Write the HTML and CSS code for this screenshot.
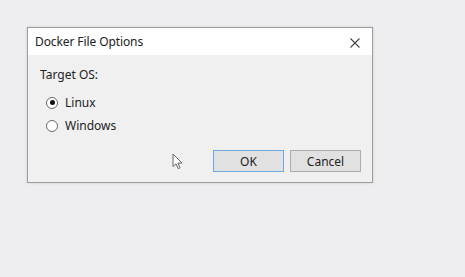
FILE: index.html
```html
<!DOCTYPE html>
<html lang="en">
<head>
  <meta charset="UTF-8" />
  <title>Docker File Options</title>
  <link rel="stylesheet" href="styles.css">
</head>
<body>
  <div class="dialog">
    <div class="titlebar">
      <span class="title">Docker File Options</span>
      <span class="close">
        <svg width="10" height="10" viewBox="0 0 10 10"><path d="M0.5 0.5 L9.5 9.5 M9.5 0.5 L0.5 9.5" stroke="#444" stroke-width="1.1" fill="none"/></svg>
      </span>
    </div>
    <div class="content">
      <div class="label">Target OS:</div>
      <div class="options">
        <label class="radio"><span class="dot checked"></span>Linux</label>
        <label class="radio"><span class="dot"></span>Windows</label>
      </div>
      <div class="buttons">
        <button class="btn default">OK</button>
        <button class="btn">Cancel</button>
      </div>
      <!-- mouse pointer -->
      <svg class="pointer" width="12" height="17" viewBox="0 0 12 17"><path d="M1 1 L1 13.5 L4 10.8 L6.2 15.6 L8 14.8 L5.9 10.1 L10 10.1 Z" fill="#fff" stroke="#666" stroke-width="1" stroke-linejoin="round"/></svg>
    </div>
  </div>
</body>
</html>
```

FILE: styles.css
```css
body {
  margin: 0;
  background: #eeeef1;
  font-family: 'Noto Sans', 'Open Sans', sans-serif;
  font-size: 12px;
  color: #1e1e1e;
  height: 277px;
}
.dialog {
  position: relative;
  margin: 27px 0 0 27px;
  width: 344px;
  height: 154px;
  border: 1px solid #9c9c9c;
  background: #f0f0f0;
  display: flex;
  flex-direction: column;
  box-shadow: 0 0 3px rgba(0, 0, 0, 0.12);
}
.titlebar {
  height: 27px;
  background: #fff;
  display: flex;
  align-items: center;
  justify-content: space-between;
  padding: 0 12px 0 7px;
}
.title {
  color: #222;
  letter-spacing: -0.1px;
}
.close {
  display: flex;
  margin-top: 2px;
}
.content {
  position: relative;
  flex: 1;
  display: flex;
  flex-direction: column;
  padding: 11px 11px 10px 12px;
}
.label {
  color: #222;
}
.options {
  display: flex;
  flex-direction: column;
  gap: 6px;
  margin: 11px 0 0 6px;
}
.radio {
  display: flex;
  align-items: center;
  height: 17px;
  color: #222;
}
.dot {
  width: 12px;
  height: 12px;
  border: 1px solid #6a6a6a;
  border-radius: 50%;
  background: #fff;
  margin-right: 7px;
  box-sizing: border-box;
  position: relative;
}
.dot.checked::after {
  content: "";
  position: absolute;
  left: 2.5px;
  top: 2.5px;
  width: 5px;
  height: 5px;
  border-radius: 50%;
  background: #111;
}
.buttons {
  margin-top: auto;
  display: flex;
  justify-content: flex-end;
  gap: 6px;
}
.btn {
  width: 71px;
  height: 22px;
  font-family: inherit;
  font-size: 12px;
  color: #222;
  background: #e1e1e1;
  border: 1px solid #adadad;
  padding: 0;
}
.btn.default {
  border: 1px solid #6fa8dc;
  box-shadow: inset 0 0 0 1px #e1e1e1;
}
.pointer {
  position: absolute;
  left: 144px;
  top: 98px;
}
```
